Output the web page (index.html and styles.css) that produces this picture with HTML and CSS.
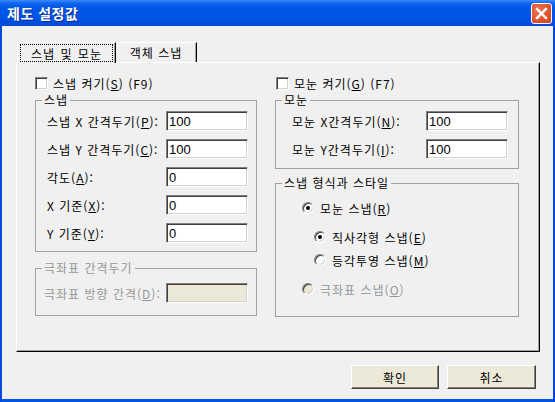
FILE: index.html
```html
<!DOCTYPE html>
<html lang="ko">
<head>
    <meta charset="utf-8">
    <title>제도 설정값</title>
    <meta name="viewport" content="width=device-width, initial-scale=1">
    <link rel="stylesheet" href="styles.css">
</head>
<body>
    <div class="window">
        <div class="titlebar">
            <span class="title">제도 설정값</span>
            <button class="close" title="닫기">
                <svg width="13" height="13" viewBox="0 0 13 13">
                    <path d="M2 2 L11 11 M11 2 L2 11" stroke="#fff" stroke-width="2.4" stroke-linecap="square"/>
                </svg>
            </button>
        </div>
        <div class="client">
            <div class="tabs">
                <div class="tab active"><span class="focus">스냅 및 모눈</span></div>
                <div class="tab second">객체 스냅</div>
            </div>
            <div class="panel">
                <div class="col col-left">
                    <label class="check"><span class="box"></span><span>스냅 켜기(<u>S</u>) (F9)</span></label>
                    <fieldset class="group group-snap">
                        <legend>스냅</legend>
                        <div class="row"><span class="lbl">스냅 X 간격두기(<u>P</u>):</span><input class="field" value="100"></div>
                        <div class="row"><span class="lbl">스냅 Y 간격두기(<u>C</u>):</span><input class="field" value="100"></div>
                        <div class="row"><span class="lbl">각도(<u>A</u>):</span><input class="field" value="0"></div>
                        <div class="row"><span class="lbl">X 기준(<u>X</u>):</span><input class="field" value="0"></div>
                        <div class="row"><span class="lbl">Y 기준(<u>Y</u>):</span><input class="field" value="0"></div>
                    </fieldset>
                    <fieldset class="group group-polar disabled">
                        <legend>극좌표 간격두기</legend>
                        <div class="row"><span class="lbl">극좌표 방향 간격(<u>D</u>):</span><input class="field" disabled></div>
                    </fieldset>
                </div>
                <div class="col col-right">
                    <label class="check"><span class="box"></span><span>모눈 켜기(<u>G</u>) (F7)</span></label>
                    <fieldset class="group group-grid">
                        <legend>모눈</legend>
                        <div class="row"><span class="lbl">모눈 X간격두기(<u>N</u>):</span><input class="field" value="100"></div>
                        <div class="row"><span class="lbl">모눈 Y간격두기(<u>I</u>):</span><input class="field" value="100"></div>
                    </fieldset>
                    <fieldset class="group group-style">
                        <legend>스냅 형식과 스타일</legend>
                        <div class="radio r-grid"><span class="dot on"></span><span>모눈 스냅(<u>R</u>)</span></div>
                        <div class="radio r-rect sub"><span class="dot on"></span><span>직사각형 스냅(<u>E</u>)</span></div>
                        <div class="radio r-iso sub"><span class="dot"></span><span>등각투영 스냅(<u>M</u>)</span></div>
                        <div class="radio r-polar disabled"><span class="dot"></span><span>극좌표 스냅(<u>O</u>)</span></div>
                    </fieldset>
                </div>
            </div>
            <div class="buttons">
                <button class="btn btn-ok">확인</button>
                <button class="btn btn-cancel">취소</button>
            </div>
        </div>
    </div>
</body>
</html>
```

FILE: styles.css
```css
* {
    box-sizing: border-box;
}
body {
    margin: 0;
    font-family: "Noto Sans CJK KR", "Noto Sans", sans-serif;
    font-size: 12px;
    letter-spacing: 1px;
    color: #000;
    background: #f0f0f0;
}
u {
    text-decoration: underline;
    text-underline-offset: 1px;
}
.window {
    width: 555px;
    height: 402px;
    display: flex;
    flex-direction: column;
    background: linear-gradient(90deg, #0842d0 0%, #0055e5 2px, #0055e5 553px, #0036c0 555px);
    padding: 0 2px 3px 2px;
}
.titlebar {
    height: 26px;
    margin: 0 -2px;
    padding: 0 2px 0 7px;
    display: flex;
    align-items: center;
    justify-content: space-between;
    background: linear-gradient(180deg, #3d8cf7 0, #1467ee 3px, #0058e8 7px, #0054e3 18px, #004ad6 26px);
}
.title {
    color: #fff;
    font-size: 14px;
    font-weight: 700;
    letter-spacing: 0.5px;
    text-shadow: 1px 1px 0 #0a2a8c;
    margin-top: -1px;
}
.close {
    width: 21px;
    height: 21px;
    margin-right: 1px;
    margin-top: 1px;
    padding: 0;
    border: 1px solid #fff;
    border-radius: 3px;
    background: radial-gradient(circle at 35% 35%, #ea7658 0%, #e1512f 60%, #c9411f 100%);
    display: flex;
    align-items: center;
    justify-content: center;
}
.client {
    flex: 1;
    background: #f0f0f0;
    display: flex;
    flex-direction: column;
}
.tabs {
    display: flex;
    align-items: flex-end;
    height: 20px;
    margin: 16px 0 0 15px;
}
.tab {
    height: 20px;
    display: flex;
    align-items: center;
    justify-content: center;
    background: #f0f0f0;
    border-top: 1px solid #fff;
    border-left: 1px solid #fff;
    border-right: 1px solid #000;
    box-shadow: inset -1px 0 #a0a0a0;
    padding-bottom: 1px;
}
.tab.active {
    width: 99px;
    height: 21px;
    margin-bottom: -1px;
    position: relative;
    z-index: 1;
    padding: 1px;
}
.tab.active .focus {
    flex: 1;
    height: 18px;
    margin: 0 1px;
    border: 1px dotted #000;
    display: flex;
    align-items: center;
    justify-content: center;
    word-spacing: 1px;
}
.tab.second {
    width: 81px;
    border-left: none;
}
.panel {
    height: 290px;
    margin: 0 13px 0 14px;
    border: 1px solid;
    border-color: #fff #000 #000 #fff;
    box-shadow: inset -1px -1px #a0a0a0;
    padding: 14px 20px 0 18px;
    display: flex;
    gap: 18px;
}
.col {
    display: flex;
    flex-direction: column;
}
.col-left {
    width: 222px;
}
.col-right {
    width: 244px;
}
.check {
    height: 13px;
    display: flex;
    align-items: center;
    gap: 5px;
    white-space: nowrap;
    line-height: 13px;
}
.col-right .check {
    margin-left: 1px;
}
.box {
    width: 13px;
    height: 13px;
    background: #fff;
    border: 1px solid;
    border-color: #808080 #fff #fff #808080;
    box-shadow: inset 1px 1px #404040, inset -1px -1px #d4d0c8;
}
.group {
    margin: 0;
    padding: 0;
    border: 1px solid #a0a0a0;
    min-width: 0;
}
.group legend {
    margin-left: 6px;
    padding: 0 2px;
    line-height: 14px;
    height: 14px;
}
.group.disabled legend,
.group.disabled .lbl,
.radio.disabled {
    color: #979797;
}
.row {
    height: 28px;
    display: flex;
    align-items: center;
    justify-content: space-between;
    white-space: nowrap;
}
.field {
    width: 82px;
    height: 20px;
    padding: 1px 2px 0 2px;
    font-family: "Liberation Sans", Arial, sans-serif;
    font-size: 13px;
    letter-spacing: 0;
    color: #000;
    background: #fff;
    border: 1px solid;
    border-color: #808080 #fff #fff #808080;
    box-shadow: inset 1px 1px #404040, inset -1px -1px #d4d0c8;
    outline: none;
}
.field:disabled {
    background: #ece9d8;
}
.group-snap {
    margin-top: 3px;
    padding-bottom: 4px;
}
.group-snap .row {
    padding: 0 8px 0 11px;
}
.group-polar {
    margin-top: 9px;
    padding: 4px 0 8px 0;
}
.group-polar .row {
    padding: 0 8px;
}
.group-grid {
    margin-top: 3px;
    padding-bottom: 5px;
}
.group-grid .row {
    padding: 0 10px 0 16px;
}
.group-style {
    margin-top: 7px;
    padding: 7px 0 16px 0;
}
.radio {
    height: 22px;
    display: flex;
    align-items: center;
    gap: 6px;
    white-space: nowrap;
    padding-left: 26px;
}
.radio.sub {
    padding-left: 38px;
}
.r-rect {
    margin-top: 7px;
}
.r-iso {
    margin-top: 1px;
}
.r-polar {
    margin-top: 7px;
}
.dot {
    width: 12px;
    height: 12px;
    border-radius: 50%;
    background: #fff;
    border: 1px solid;
    border-color: #808080 #fff #fff #808080;
    box-shadow: inset 1px 1px #404040, inset -1px -1px #d4d0c8;
    display: flex;
    align-items: center;
    justify-content: center;
}
.dot.on::after {
    content: "";
    width: 4px;
    height: 4px;
    border-radius: 50%;
    background: #000;
}
.radio.disabled .dot {
    background: #ece9d8;
}
.buttons {
    display: flex;
    justify-content: flex-end;
    gap: 8px;
    margin-top: 13px;
    padding-right: 17px;
}
.btn {
    width: 88px;
    height: 24px;
    padding: 0;
    font-family: "Noto Sans CJK KR", "Noto Sans", sans-serif;
    font-size: 12px;
    letter-spacing: 1px;
    color: #000;
    background: #ece9d8;
    border: 1px solid;
    border-color: #fff #404040 #404040 #fff;
    box-shadow: inset -1px -1px #808080;
}
.btn-cancel {
    width: 89px;
}
```
